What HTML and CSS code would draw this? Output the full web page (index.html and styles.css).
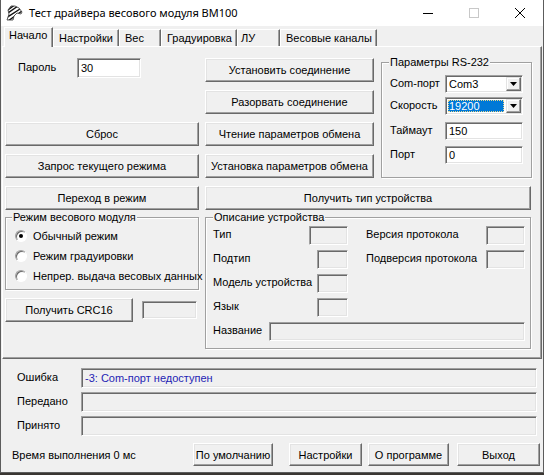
FILE: index.html
```html
<!DOCTYPE html>
<html lang="ru">
<head>
<meta charset="utf-8">
<title>Тест драйвера весового модуля ВМ100</title>
<link rel="stylesheet" href="styles.css">
</head>
<body>
<div class="window">
  <div class="titlebar">
    <svg class="app-icon" width="18" height="16" viewBox="0 0 18 16">
      <defs>
        <clipPath id="head"><path d="M2 15 L4 9 L3 5 L6 1 L10 1 L14 3 L17 7 L16 9 L12 8 L9 11 L8 15 Z"/></clipPath>
      </defs>
      <path d="M2 15 L4 9 L3 5 L6 1 L10 1 L14 3 L17 7 L16 9 L12 8 L9 11 L8 15 Z" fill="#fff"/>
      <g clip-path="url(#head)" stroke="#111" stroke-width="1.4">
        <path d="M0 4 L8 -2 M0 7 L11 -1 M0 10 L13 1 M1 13 L15 4 M3 16 L17 6 M6 17 L18 9"/>
      </g>
      <path d="M2 15 L4 9 L3 5 L6 1 L10 1 L14 3 L17 7 L16 9 L12 8 L9 11 L8 15 Z" fill="none" stroke="#333" stroke-width="0.8"/>
    </svg>
    <span class="title">Тест драйвера весового модуля ВМ100</span>
    <div class="controls">
      <span class="ctl"><svg width="10" height="10" viewBox="0 0 10 10"><rect x="0" y="5" width="10" height="1" fill="#000"/></svg></span>
      <span class="ctl"><svg width="10" height="10" viewBox="0 0 10 10"><rect x="0.5" y="0.5" width="9" height="9" fill="none" stroke="#c8c8c8"/></svg></span>
      <span class="ctl"><svg width="10" height="10" viewBox="0 0 10 10"><path d="M0 0 L10 10 M10 0 L0 10" stroke="#000" stroke-width="1"/></svg></span>
    </div>
  </div>

  <div class="tabstrip">
    <div class="tab active t1">Начало</div>
    <div class="tab t2">Настройки</div>
    <div class="tab t3">Вес</div>
    <div class="tab t4">Градуировка</div>
    <div class="tab t5">ЛУ</div>
    <div class="tab t6">Весовые каналы</div>
  </div>

  <div class="page">
    <div class="grid">
      <div class="pw">
        <span class="pw-label">Пароль</span>
        <span class="field pw-input">30</span>
      </div>

      <button class="btn a-c1">Установить соединение</button>
      <button class="btn a-c2">Разорвать соединение</button>
      <button class="btn a-c3">Чтение параметров обмена</button>
      <button class="btn a-c4">Установка параметров обмена</button>

      <button class="btn a-r1">Сброс</button>
      <button class="btn a-r2">Запрос текущего режима</button>
      <button class="btn a-r3">Переход в режим</button>

      <fieldset class="group rs">
        <legend>Параметры RS-232</legend>
        <div class="rs-body">
          <div class="rs-row r-1">
            <span class="lbl">Com-порт</span>
            <span class="field combo"><span class="val">Com3</span><span class="drop"><svg width="7" height="4" viewBox="0 0 7 4"><path d="M0 0 H7 L3.5 4 Z" fill="#000"/></svg></span></span>
          </div>
          <div class="rs-row r-2">
            <span class="lbl">Скорость</span>
            <span class="field combo"><span class="val sel">19200</span><span class="drop"><svg width="7" height="4" viewBox="0 0 7 4"><path d="M0 0 H7 L3.5 4 Z" fill="#000"/></svg></span></span>
          </div>
          <div class="rs-row r-3">
            <span class="lbl">Таймаут</span>
            <span class="field input">150</span>
          </div>
          <div class="rs-row r-4">
            <span class="lbl">Порт</span>
            <span class="field input">0</span>
          </div>
        </div>
      </fieldset>

      <button class="btn a-gt">Получить тип устройства</button>

      <div class="left-stack">
        <fieldset class="group mode">
          <legend>Режим весового модуля</legend>
          <div class="mode-body">
            <div class="radio"><i class="dot checked"></i><span>Обычный режим</span></div>
            <div class="radio"><i class="dot"></i><span>Режим градуировки</span></div>
            <div class="radio"><i class="dot"></i><span>Непрер. выдача весовых данных</span></div>
          </div>
        </fieldset>
        <div class="crc-row">
          <button class="btn crc-btn">Получить CRC16</button>
          <span class="field ro crc-box"></span>
        </div>
      </div>

      <fieldset class="group desc">
        <legend>Описание устройства</legend>
        <div class="desc-body">
          <div class="cell"><span>Тип</span><span class="field ro w39"></span></div>
          <div class="cell"><span>Версия протокола</span><span class="field ro w39"></span></div>
          <div class="cell"><span>Подтип</span><span class="field ro w31"></span></div>
          <div class="cell"><span>Подверсия протокола</span><span class="field ro w39"></span></div>
          <div class="cell"><span>Модель устройства</span><span class="field ro w31"></span></div>
          <div class="cell"></div>
          <div class="cell"><span>Язык</span><span class="field ro w31"></span></div>
          <div class="cell"></div>
          <div class="cell wide"><span class="name-lbl">Название</span><span class="field ro grow"></span></div>
        </div>
      </fieldset>
    </div>
  </div>

  <div class="status">
    <div class="log">
      <span class="log-lbl">Ошибка</span>
      <span class="field ro log-box err">-3: Сom-порт недоступен</span>
      <span class="log-lbl">Передано</span>
      <span class="field ro log-box"></span>
      <span class="log-lbl">Принято</span>
      <span class="field ro log-box"></span>
    </div>
    <div class="bottom-row">
      <span class="time">Время выполнения 0 мс</span>
      <button class="btn b-def">По умолчанию</button>
      <button class="btn b-set">Настройки</button>
      <button class="btn b-about">О программе</button>
      <button class="btn b-exit">Выход</button>
    </div>
  </div>
</div>
</body>
</html>
```

FILE: styles.css
```css
* { box-sizing: border-box; }

body {
  margin: 0;
  width: 544px;
  height: 475px;
  overflow: hidden;
  background: #3a3632;
  font-family: "Liberation Sans", Arial, sans-serif;
  font-size: 11px;
  color: #000;
}

.window {
  width: 544px;
  height: 473px;
  background: #f0f0f0;
  border-left: 1px solid #5c5c5c;
  border-right: 1px solid #5c5c5c;
  border-bottom: 1px solid #5c5c5c;
  display: flex;
  flex-direction: column;
}

/* title bar */
.titlebar {
  height: 26px;
  flex: none;
  background: #fff;
  display: flex;
  align-items: center;
}
.app-icon { margin-left: 4px; flex: none; }
.title {
  margin-left: 6px;
  font-family: "Noto Sans", "Open Sans", sans-serif;
  font-size: 11px;
  line-height: 16px;
}
.controls { margin-left: auto; display: flex; height: 26px; }
.ctl {
  width: 46px;
  display: flex;
  align-items: center;
  justify-content: center;
}

/* tabs */
.tabstrip {
  height: 20px;
  flex: none;
  display: flex;
  align-items: flex-end;
  padding-left: 3px;
  position: relative;
  z-index: 2;
}
.tab {
  height: 17px;
  padding-left: 5px;
  line-height: 16px;
  border-left: 1px solid #fff;
  border-top: 1px solid #fff;
  border-right: 1px solid #696969;
  box-shadow: inset -1px 0 #a0a0a0;
  white-space: nowrap;
}
.tab.active {
  height: 20px;
  margin-bottom: -1px;
  background: #f0f0f0;
  line-height: 15px;
  padding-left: 4px;
}
.t1 { width: 49px; }
.t2 { width: 66px; }
.t3 { width: 42px; }
.t4 { width: 76px; }
.t5 { width: 43px; padding-left: 3px; }
.t6 { width: 97px; }

/* tab page */
.page {
  flex: none;
  margin-left: 1px;
  width: 540px;
  height: 313px;
  border: 1px solid;
  border-color: #fff #696969 #696969 #fff;
  box-shadow: inset -1px -1px #a0a0a0;
  padding: 11px 0 0 2px;
}

.grid {
  display: grid;
  grid-template-columns: 194px 169px 152px;
  grid-template-rows: 24px 24px 24px 24px 24px auto;
  column-gap: 6px;
  row-gap: 8px;
  grid-template-areas:
    "pw c1 rs"
    "pw c2 rs"
    "r1 c3 rs"
    "r2 c4 rs"
    "r3 gt gt"
    "lf ds ds";
}

/* generic controls */
.btn {
  display: flex;
  align-items: center;
  justify-content: center;
  height: 24px;
  padding: 0;
  margin: 0;
  font: inherit;
  color: #000;
  background: #f0f0f0;
  border: 1px solid;
  border-color: #fff #696969 #696969 #fff;
  box-shadow: inset -1px -1px #a0a0a0, inset 1px 1px #e3e3e3;
  white-space: nowrap;
}

.field {
  display: flex;
  align-items: center;
  height: 19px;
  padding-left: 3px;
  background: #fff;
  border: 1px solid;
  border-color: #a0a0a0 #fff #fff #a0a0a0;
  box-shadow: inset 1px 1px #696969, inset -1px -1px #e3e3e3;
  white-space: nowrap;
}
.field.ro { background: #f0f0f0; }

.a-c1 { grid-area: c1; }
.a-c2 { grid-area: c2; }
.a-c3 { grid-area: c3; }
.a-c4 { grid-area: c4; }
.a-r1 { grid-area: r1; }
.a-r2 { grid-area: r2; }
.a-r3 { grid-area: r3; }
.a-gt { grid-area: gt; margin-right: 1px; }

/* password */
.pw {
  grid-area: pw;
  align-self: start;
  display: flex;
  align-items: center;
  padding-left: 13px;
}
.pw-label { width: 59px; padding-bottom: 3px; }
.pw-input { width: 64px; height: 20px; }

/* group boxes */
.group {
  margin: 0;
  padding: 0;
  min-width: 0;
  border: 1px solid #a0a0a0;
  box-shadow: inset 1px 1px #fff, 1px 1px #fff;
}
.group legend {
  padding: 0 1px;
  margin-left: 7px;
  line-height: 13px;
  background: #f0f0f0;
}

.rs {
  grid-area: rs;
  align-self: start;
  margin: -2px 0 0 1px;
  height: 122px;
}
.rs-body { padding: 6px 0 0 8px; }
.rs-row {
  display: grid;
  grid-template-columns: 55px 78px;
  align-items: center;
  height: 18px;
}
.rs-row .lbl { padding-bottom: 3px; }
.r-2 { margin-top: 4px; }
.r-3 { margin-top: 7px; }
.r-4 { margin-top: 6px; }
.rs-row .field { height: 18px; }

.combo { padding: 1px; }
.combo .val {
  flex: 1;
  align-self: stretch;
  display: flex;
  align-items: center;
  margin: 1px 2px 1px 1px;
  padding-left: 1px;
}
.combo .val.sel {
  background: #0078d7;
  color: #fff;
  outline: 1px dotted #e8d890;
  outline-offset: -1px;
}
.drop {
  width: 15px;
  align-self: stretch;
  display: flex;
  align-items: center;
  justify-content: center;
  background: #f0f0f0;
  border: 1px solid;
  border-color: #e3e3e3 #696969 #696969 #e3e3e3;
  box-shadow: inset -1px -1px #a0a0a0, inset 1px 1px #fff;
}

/* left bottom stack */
.left-stack {
  grid-area: lf;
  display: flex;
  flex-direction: column;
}
.mode {
  margin-top: -7px;
  height: 79px;
}
.mode legend { margin-left: 6px; }
.mode-body { padding: 2px 0 0 9px; }
.radio {
  display: flex;
  align-items: center;
  height: 20px;
  white-space: nowrap;
}
.dot {
  width: 12px;
  height: 12px;
  flex: none;
  border-radius: 50%;
  background: #fff;
  border: 1px solid;
  border-color: #a0a0a0 #fff #fff #a0a0a0;
  box-shadow: inset 1px 1px #696969;
  margin-right: 6px;
  display: flex;
  align-items: center;
  justify-content: center;
}
.dot.checked::after {
  content: "";
  width: 4px;
  height: 4px;
  border-radius: 50%;
  background: #000;
}

.crc-row {
  margin-top: 8px;
  display: flex;
  align-items: center;
}
.crc-btn { width: 128px; }
.crc-box { width: 55px; height: 18px; margin-left: 9px; }

/* device description */
.desc {
  grid-area: ds;
  margin: -7px 1px 0 0;
  height: 138px;
}
.desc legend { margin-left: 7px; }
.desc-body {
  padding: 2px 0 0 7px;
  display: grid;
  grid-template-columns: 135px 159px;
  column-gap: 18px;
  grid-auto-rows: 19px;
  row-gap: 5px;
}
.cell {
  display: flex;
  align-items: center;
  justify-content: space-between;
  white-space: nowrap;
}
.cell > span:first-child { padding-bottom: 3px; }
.cell .field { height: 19px; }
.w39 { width: 39px; }
.w31 { width: 31px; }
.wide { grid-column: 1 / span 2; justify-content: flex-start; }
.name-lbl { width: 56px; }
.grow { flex: 1; }

/* status area */
.status { padding: 9px 0 0 11px; }
.log {
  margin-left: 5px;
  display: grid;
  grid-template-columns: 64px 456px;
  grid-auto-rows: 20px;
  row-gap: 4px;
  align-items: center;
}
.log-lbl { padding-bottom: 2px; }
.log-box { height: 20px; }
.err { color: #2424b4; }

.bottom-row {
  margin-top: 7px;
  display: flex;
  align-items: center;
}
.bottom-row .btn { height: 23px; }
.time { width: 181px; }
.b-def { width: 80px; }
.b-set { width: 73px; margin-left: 16px; }
.b-about { width: 81px; margin-left: 6px; }
.b-exit { width: 83px; margin-left: 8px; }
```
